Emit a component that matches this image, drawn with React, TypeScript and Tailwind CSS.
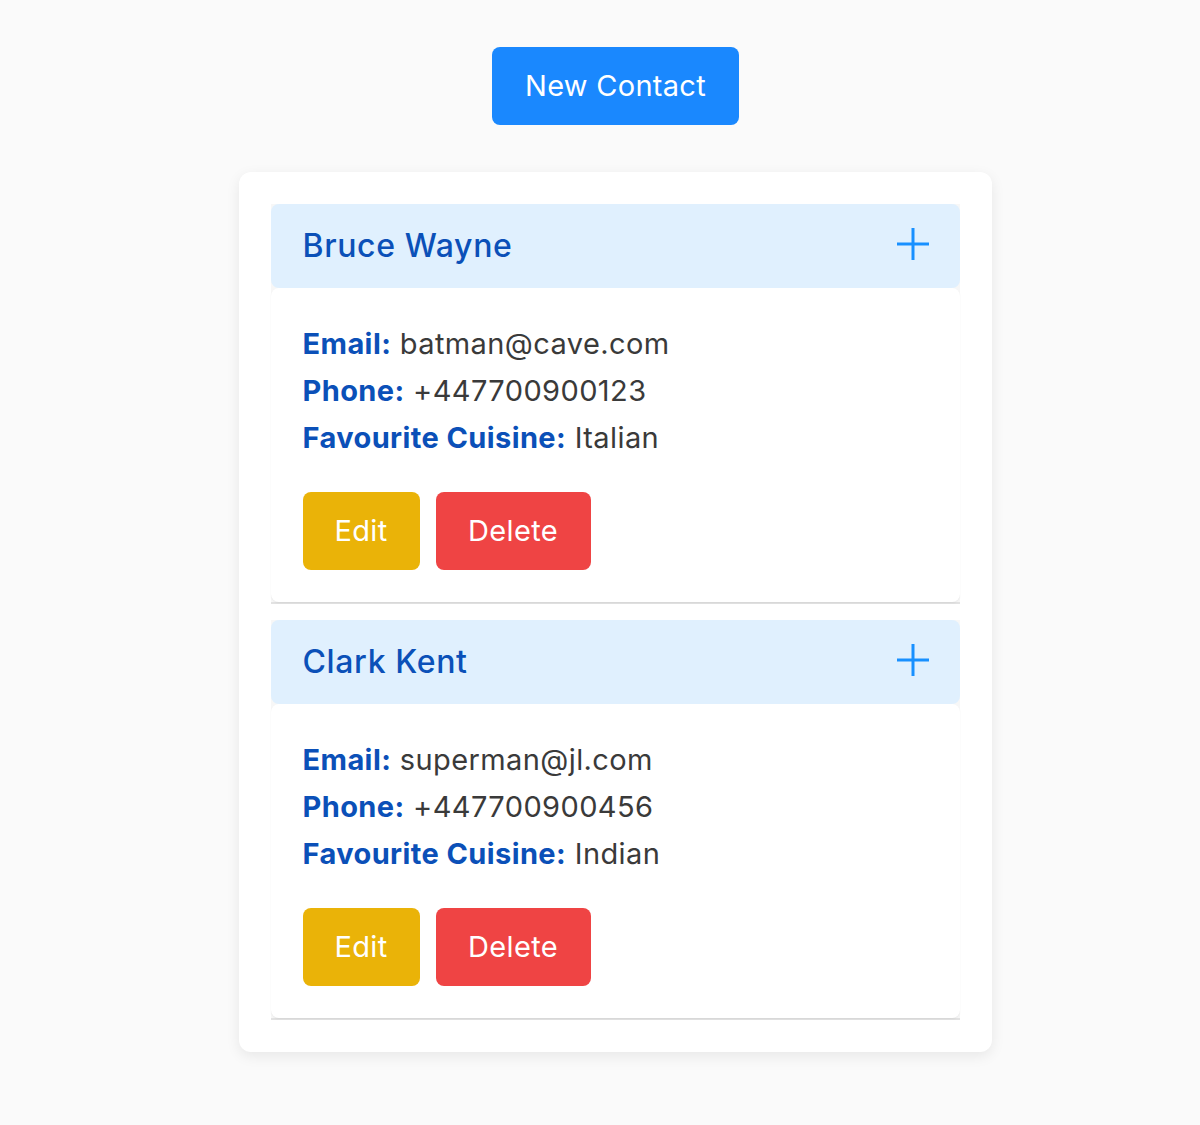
import { useState } from 'react';

interface Contact {
  id: number;
  name: string;
  email: string;
  phone: string;
  cuisine: string;
}

const contacts: Contact[] = [
  { id: 1, name: 'Bruce Wayne', email: 'batman@cave.com', phone: '+447700900123', cuisine: 'Italian' },
  { id: 2, name: 'Clark Kent', email: 'superman@jl.com', phone: '+447700900456', cuisine: 'Indian' },
];

const PlusIcon = () => (
  <svg className="-mt-[5px]" width="34" height="34" viewBox="0 0 34 34" fill="none" xmlns="http://www.w3.org/2000/svg">
    <path d="M17 1V33M1 17H33" stroke="#1890ff" strokeWidth="3" />
  </svg>
);

const ContactItem = ({ contact }: { contact: Contact }) => {
  const [open, setOpen] = useState(true);

  return (
    <div className="border-b-2 border-[#e2e2e2] bg-[#f7f7f7]">
      <button
        onClick={() => setOpen(!open)}
        className="flex w-full h-[84px] items-center justify-between rounded-lg bg-[#e0f0fe] pl-8 pr-[30px] text-left"
      >
        <span className="text-[32px] font-medium tracking-[0.02em] text-[#0b50b8]">{contact.name}</span>
        <PlusIcon />
      </button>
      {open && (
        <div className="rounded-lg bg-white px-8 pt-8 pb-8 tracking-[0.025em] shadow-[0_1px_2px_rgba(0,0,0,0.06)]">
          <p className="text-[29px] leading-[47px] text-[#3a3a3a]">
            <span className="font-bold text-[#0b50b8]">Email:</span> {contact.email}
          </p>
          <p className="text-[29px] leading-[47px] text-[#3a3a3a]">
            <span className="font-bold text-[#0b50b8]">Phone:</span> {contact.phone}
          </p>
          <p className="text-[29px] leading-[47px] text-[#3a3a3a]">
            <span className="font-bold text-[#0b50b8]">Favourite Cuisine:</span> {contact.cuisine}
          </p>
          <div className="mt-[31px] flex gap-4 tracking-[0.02em]">
            <button className="h-[78px] w-[117px] rounded-lg bg-[#eab308] text-[29px] text-white">Edit</button>
            <button className="h-[78px] w-[155px] rounded-lg bg-[#ef4444] text-[29px] text-white">Delete</button>
          </div>
        </div>
      )}
    </div>
  );
};

const App = () => {
  return (
    <div className="min-h-[1125px] bg-[#fafafa] pt-[47px] font-['Inter','Liberation_Sans',sans-serif]">
      <div className="flex justify-center">
        <button className="ml-[31px] h-[78px] w-[247px] rounded-lg bg-[#1a88fe] text-[29px] tracking-[0.01em] text-white">
          New Contact
        </button>
      </div>
      <div className="mx-auto mt-[47px] w-[753px] translate-x-[15px] rounded-xl bg-white p-8 shadow-[0_4px_14px_rgba(0,0,0,0.08)]">
        <div className="flex flex-col gap-4">
          {contacts.map((contact) => (
            <ContactItem key={contact.id} contact={contact} />
          ))}
        </div>
      </div>
    </div>
  );
};

export default App;
